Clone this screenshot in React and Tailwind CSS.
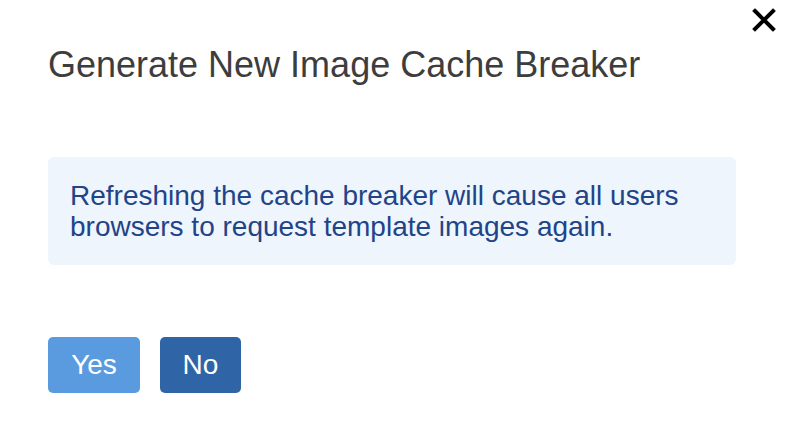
export default function App() {
  return (
    <div className="relative w-[788px] h-[430px] bg-white" style={{ fontFamily: '"Liberation Sans", Arial, sans-serif' }}>
      <button className="absolute right-[12px] top-[8px] w-[24px] h-[24px] flex items-center justify-center">
        <svg width="24" height="24" viewBox="0 0 24 24">
          <path d="M3 3 L21 21 M21 3 L3 21" stroke="#000" strokeWidth="4" strokeLinecap="square" />
        </svg>
      </button>
      <div className="pl-[48px] pr-[52px] pt-[45px]">
        <h2 className="text-[36px] leading-[40px] text-[#3d3d3d]">Generate New Image Cache Breaker</h2>
        <div className="mt-[72px] rounded-[6px] bg-[#eef5fd] px-[22px] py-[23px] text-[28px] leading-[31px] text-[#1f4487]">
          Refreshing the cache breaker will cause all users
          <br />
          browsers to request template images again.
        </div>
        <div className="mt-[72px] flex gap-[20px]">
          <button className="w-[92px] h-[56px] rounded-[5px] bg-[#5a9be0] text-white text-[28px]">Yes</button>
          <button className="w-[81px] h-[56px] rounded-[5px] bg-[#2f64a6] text-white text-[28px]">No</button>
        </div>
      </div>
    </div>
  );
}
